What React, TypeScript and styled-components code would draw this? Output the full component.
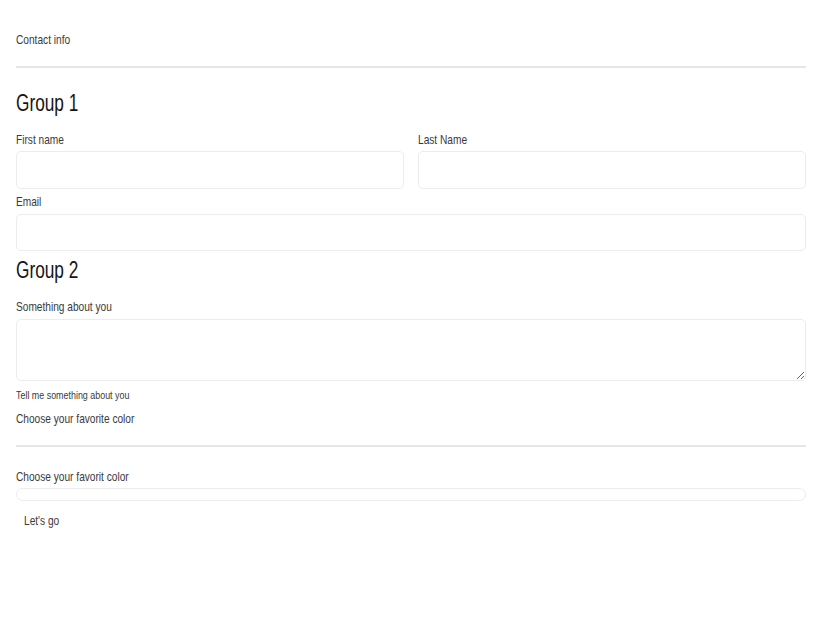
import React from "react";
import styled, { createGlobalStyle } from "styled-components";

const Global = createGlobalStyle`
  html, body { margin: 0; padding: 0; background: #ffffff; }
  body { font-family: "Liberation Sans", Arial, sans-serif; color: #3a3a3a; }
  * { box-sizing: border-box; }
`;

const Form = styled.form`
  display: flex;
  flex-direction: column;
  padding: 32px 32px 0 16px;
  width: 838px;
`;

/* narrow face: the reference uses a condensed sans */
const Narrow = styled.span<{ $sx?: number }>`
  display: inline-block;
  white-space: nowrap;
  transform: scaleX(${(p) => p.$sx ?? 0.78});
  transform-origin: left center;
`;

const Legend = styled.div<{ $mt?: number }>`
  font-size: 13px;
  line-height: 16px;
  color: #3a3a3a;
  margin-top: ${(p) => p.$mt ?? 0}px;
`;

const Divider = styled.div<{ $mt: number }>`
  height: 2px;
  background: #e6e6e6;
  margin-top: ${(p) => p.$mt}px;
`;

const Heading = styled.h2<{ $mt: number }>`
  margin: ${(p) => p.$mt}px 0 0 0;
  font-size: 23px;
  line-height: 26px;
  font-weight: 400;
  color: #151515;
`;

const Label = styled.label<{ $mt: number }>`
  display: block;
  font-size: 13px;
  line-height: 16px;
  color: #3a3a3a;
  margin-top: ${(p) => p.$mt}px;
`;

const Row = styled.div`
  display: grid;
  grid-template-columns: 1fr 1fr;
  column-gap: 14px;
`;

const Field = styled.div`
  display: flex;
  flex-direction: column;
`;

const Input = styled.input<{ $h: number; $mt: number }>`
  display: block;
  width: 100%;
  height: ${(p) => p.$h}px;
  margin-top: ${(p) => p.$mt}px;
  border: 1px solid #ececec;
  border-radius: 5px;
  background: #fff;
  outline: none;
  padding: 0 8px;
`;

const TextArea = styled.textarea`
  display: block;
  width: 100%;
  height: 62px;
  margin-top: 4px;
  border: 1px solid #ececec;
  border-radius: 5px;
  background: #fff;
  outline: none;
  resize: vertical;
  font-family: inherit;
`;

const Help = styled.div`
  font-size: 11px;
  line-height: 14px;
  color: #3a3a3a;
  margin-top: 7px;
`;

const Bar = styled.div`
  height: 13px;
  margin-top: 3px;
  border: 1px solid #ececec;
  border-radius: 7px;
  background: #fff;
`;

const Button = styled.button`
  align-self: flex-start;
  margin-top: 12px;
  padding: 0 8px;
  height: 16px;
  line-height: 16px;
  border: none;
  background: transparent;
  font-family: inherit;
  font-size: 13px;
  color: #3a3a3a;
  text-align: left;
`;

export default function App() {
  return (
    <>
      <Global />
      <Form onSubmit={(e) => e.preventDefault()}>
        <Legend><Narrow>Contact info</Narrow></Legend>
        <Divider $mt={18} />
        <Heading $mt={22}><Narrow $sx={0.75}>Group 1</Narrow></Heading>
        <Row>
          <Field>
            <Label $mt={16}><Narrow>First name</Narrow></Label>
            <Input $h={38} $mt={3} />
          </Field>
          <Field>
            <Label $mt={16}><Narrow>Last Name</Narrow></Label>
            <Input $h={38} $mt={3} />
          </Field>
        </Row>
        <Label $mt={5}><Narrow>Email</Narrow></Label>
        <Input $h={37} $mt={4} />
        <Heading $mt={6}><Narrow $sx={0.75}>Group 2</Narrow></Heading>
        <Label $mt={16}><Narrow>Something about you</Narrow></Label>
        <TextArea />
        <Help><Narrow $sx={0.81}>Tell me something about you</Narrow></Help>
        <Legend $mt={9}><Narrow>Choose your favorite color</Narrow></Legend>
        <Divider $mt={18} />
        <Label $mt={22}><Narrow>Choose your favorit color</Narrow></Label>
        <Bar />
        <Button type="submit"><Narrow>Let's go</Narrow></Button>
      </Form>
    </>
  );
}
